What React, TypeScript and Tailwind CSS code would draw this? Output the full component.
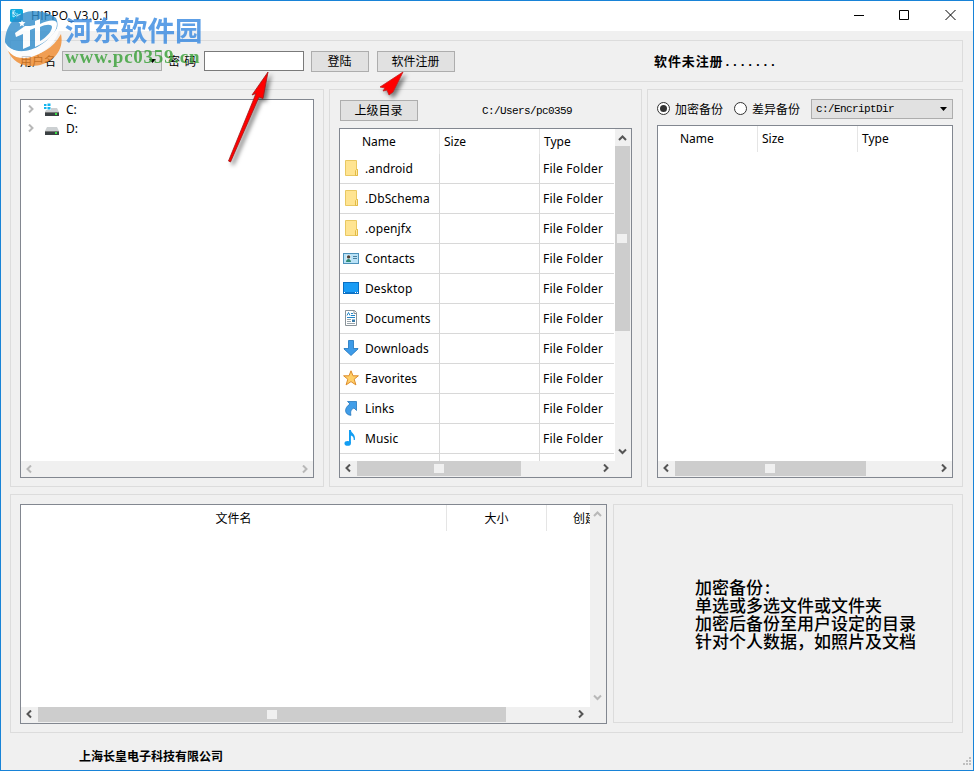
import React from "react";

const files = [
    { name: ".android", icon: "folder" },
    { name: ".DbSchema", icon: "folder" },
    { name: ".openjfx", icon: "folder" },
    { name: "Contacts", icon: "contacts" },
    { name: "Desktop", icon: "desktop" },
    { name: "Documents", icon: "documents" },
    { name: "Downloads", icon: "downloads" },
    { name: "Favorites", icon: "favorites" },
    { name: "Links", icon: "links" },
    { name: "Music", icon: "music" },
];

const FileIcon = ({ kind }: { kind: string }) => (
    <svg width="16" height="16" viewBox="0 0 16 16" className="-mt-px shrink-0">
        {kind === "folder" && (
            <>
                <path d="M2.5 .5h11v9h1v6h-12z" fill="#ffe491" stroke="#e9c862" />
                <path d="M12.5 15.5v-5l1-1h1v6z" fill="#ffe9a4" stroke="#e3bb45" />
            </>
        )}
        {kind === "contacts" && (
            <>
                <rect x=".5" y="3.5" width="15" height="10" fill="#b9e2f7" stroke="#4d92bb" />
                <rect x="3" y="5" width="5" height="7" fill="#d5eef9" />
                <circle cx="5.6" cy="6.9" r="1.7" fill="#4f4036" />
                <path d="M3 12c0-4 5-4 5 0z" fill="#2f8a76" />
                <path d="M10 6.5h4M10 8.5h4" stroke="#4a7f9e" />
            </>
        )}
        {kind === "desktop" && (
            <>
                <rect x=".5" y="2.5" width="15" height="11" fill="#1a9cf5" stroke="#0b6fc2" />
                <path d="M1 12.5h14" stroke="#0b78d0" />
                <path d="M1 12.5h1M12 12.5h1M14 12.5h1" stroke="#fff" />
            </>
        )}
        {kind === "documents" && (
            <>
                <path d="M2.5 .5h9l2 2v13h-11z" fill="#fff" stroke="#8a9399" />
                <path d="M11 .5v3h2.5" fill="none" stroke="#8a9399" />
                <path d="M4 5.5l1.500-3 1.500 3M8 3.500h2M8 5.500h4M4 7.500h8" fill="none" stroke="#2486c8" />
                <path d="M4 9.500h4M4 11.500h4M4 13.500h8" stroke="#9aa5ab" />
                <rect x="9" y="9.500" width="3" height="2.500" fill="#397ba8" />
            </>
        )}
        {kind === "downloads" && (
            <path d="M5.500 .5h5v8h4.500v.5l-7 6.500L1 9v-.5h4.500z" fill="#3d9be8" stroke="#1d74bd" strokeWidth=".8" />
        )}
        {kind === "favorites" && (
            <path d="M8 .8l2 5h5.400l-4.200 3.400 1.700 5.700L8 11.600l-4.900 3.300 1.700-5.700L.6 5.800H6z" fill="#ffcf68" stroke="#dd8d2d" />
        )}
        {kind === "links" && (
            <path d="M4.500 1.500h9v9l-2.500-2.500c-3 1-4 4-3 7.300C1.500 15 .5 8 7 4z" fill="#429ee8" stroke="#2479bf" strokeWidth=".8" />
        )}
        {kind === "music" && (
            <>
                <ellipse cx="4.700" cy="13.400" rx="3.200" ry="2.400" fill="#129df2" />
                <path d="M6 0h1.900c.3 3.500 5 4 4 10h-1.200c.3-3-1-4-2.800-4.600V13H6z" fill="#129df2" />
            </>
        )}
    </svg>
);

const Chevron = ({ dir, muted }: { dir: "left" | "right" | "up" | "down"; muted?: boolean }) => {
    const shapes = {
        left: "M6 .5L2.500 4 6 7.500",
        right: "M3 .5L6.500 4 3 7.500",
        up: "M1 6L4.500 2.500 8 6",
        down: "M1 2.500L4.500 6 8 2.500",
    };
    return (
        <svg width="9" height="9" viewBox="0 0 9 9" className="shrink-0">
            <path d={shapes[dir]} fill="none" stroke={muted ? "#b8b8b8" : "#555"} strokeWidth="2" />
        </svg>
    );
};

const Grip = () => <span className="mr-px h-[9px] w-[10px] bg-[#f0f0f0]" />;

const DriveIcon = ({ system }: { system?: boolean }) => (
    <svg width="16" height="14" viewBox="0 0 16 14" className="shrink-0">
        <path d="M3 5h10l2 4H1z" fill="#ccd0d2" />
        <rect x="1" y="9" width="14" height="4" fill="#3b4043" />
        <path d="M1 9.500h14" stroke="#777" />
        <rect x="11" y="10" width="2" height="2" fill="#36e045" />
        {system && <path d="M0 0h7v7H0z" fill="#fff" />}
        {system && <path d="M0 1h2.500v2H0zM3.500 .5h3V3h-3zM0 4h2.500v2H0zM3.500 4h3v2.500h-3z" fill="#12b4ee" />}
    </svg>
);

const Watermark = () => (
    <div className="pointer-events-none absolute left-[4px] top-[8px] flex h-[60px] w-[210px] opacity-80">
        <svg width="58" height="60" viewBox="0 0 58 60" className="shrink-0">
            <path d="M0 34C0 14 14 2 29 2c9 0 17 3 22 7 5 10-3 23-15 29C24 45 7 45 0 34z" fill="#2e8ccb" />
            <path d="M56 25c4 19-12 32-29 32C15 57 7 51 3 42c18 10 42 4 53-17z" fill="#f08a2c" />
            <path d="M0 33c7 16 39 12 55-19 0 18-17 33-34 35C9 50 1 43 0 33z" fill="#fff" />
            <path d="M10 24l10-7h5v20l-7 3V25l-7 3z" fill="#fff" />
            <path fillRule="evenodd" d="M25 17l5-1v-4l5-2v5c8-4 17-5 17 0 0 9-9 17-22 23V19l-5 2zM35 18v14c7-4 12-10 12-14 0-3-6-3-12 0z" fill="#fff" />
            <path d="M17 11l1 2 2.500.3-2 1.700.5 2.500-2-1.300-2.200 1.300.6-2.500-1.900-1.700 2.500-.3z" fill="#fff" />
        </svg>
        <div className="flex w-[142px] flex-col whitespace-nowrap pl-[2px]">
            <span className="h-[30px] font-['Noto_Sans_CJK_SC',sans-serif] text-[27.500px] font-bold leading-[41px] text-[#3588e0]">河东软件园</span>
            <span className="font-['Liberation_Serif',serif] text-[19px] font-bold leading-[36px] tracking-[0.750px] text-[#37a035]">www.pc0359.cn</span>
        </div>
    </div>
);

const Arrows = () => (
    <svg width="240" height="105" viewBox="0 0 240 105" className="pointer-events-none absolute left-[219px] top-[64px] drop-shadow-[3px_3px_2px_rgba(0,0,0,0.5)]">
        <path d="M48 7L32 30l4-1.500L8.500 96l2 1L39 32l4 1.500z" fill="#f00" stroke="#a01818" strokeWidth=".8" />
        <path d="M183 7l-23 15 5 1-2 3 4-1 2 5 4-3z" fill="#f00" stroke="#c51c1c" strokeWidth=".8" />
    </svg>
);

const Button = ({ children, className }: { children: React.ReactNode; className: string }) => (
    <button className={`flex h-[21px] shrink-0 items-center justify-center border border-[#adadad] bg-[#e1e1e1] pb-px pr-px ${className}`}>{children}</button>
);

const Caret = () => (
    <svg width="7" height="4" viewBox="0 0 7 4" className="mr-[5px] shrink-0">
        <path d="M0 0h7L3.500 4z" fill="#000" />
    </svg>
);

const Radio = ({ checked }: { checked?: boolean }) => (
    <span className="-mt-px flex size-[13px] shrink-0 items-center justify-center rounded-full border border-[#333] bg-white">
        {checked && <span className="size-[7px] rounded-full bg-[#333]" />}
    </span>
);

export default function App() {
    return (
        <div className="relative flex h-[771px] w-[974px] flex-col overflow-hidden border border-[#1883d7] bg-[#f0f0f0] font-['Noto_Sans_CJK_SC',sans-serif] text-[12px] leading-none text-black">
            <header className="flex h-[30px] shrink-0 items-center bg-white pb-[2px] pl-[9px] pr-[17px]">
                <svg width="13" height="13" viewBox="0 0 13 13">
                    <rect width="13" height="13" rx="1.500" fill="#10a9dd" />
                    <path d="M3 1v7l2-1M2 4h4M5 1L3 4l3 3M7 4v6M9 5v5M7 7l4-2" fill="none" stroke="#d9f4ff" strokeWidth=".8" />
                </svg>
                <span className="ml-[8px] whitespace-pre pt-px font-['Open_Sans',sans-serif] text-[12px] tracking-[0.300px]">HIPPO_V3.0.1</span>
                <svg width="104" height="12" viewBox="0 0 104 12" className="ml-auto" fill="none" stroke="#000">
                    <path d="M2 6.500h10M47.500 1.500h9v9h-9zM93.500 1l10 10M103.500 1l-10 10" />
                </svg>
            </header>

            <main className="flex flex-col gap-[7px] px-[9px] pt-[9px]">
                <section className="flex h-[42px] w-[953px] items-center border border-[#dcdcdc] pl-[8px]">
                    <span className="w-[43px] pl-px">用户名</span>
                    <div className="flex h-5 w-[100px] items-center justify-end border border-[#adadad] bg-[#e1e1e1]"><Caret /></div>
                    <span className="ml-[6px] w-[36px] whitespace-pre tracking-[0.800px]">密 码</span>
                    <div className="h-5 w-[100px] border border-[#7a7a7a] bg-white" />
                    <Button className="ml-[7px] w-[58px]">登陆</Button>
                    <Button className="ml-[8px] w-[78px]">软件注册</Button>
                    <span className="ml-[199px] pt-px text-[13px] font-bold tracking-[0.900px]">软件未注册<span className="font-['Liberation_Mono',monospace] tracking-[-0.200px]">.......</span></span>
                </section>

                <div className="flex h-[398px] gap-[5px]">
                    <section className="w-[314px] border border-[#dcdcdc] p-[9px]">
                        <div className="flex h-[379px] w-[294px] flex-col border border-[#828790] bg-white">
                            <div className="flex h-[19px] items-center gap-[9px] pl-[5px]">
                                <Chevron dir="right" muted />
                                <DriveIcon system />
                                <span className="-ml-[3px] pt-px font-['Noto_Sans',sans-serif]">C:</span>
                            </div>
                            <div className="flex h-[19px] items-center gap-[9px] pl-[5px]">
                                <Chevron dir="right" muted />
                                <DriveIcon />
                                <span className="-ml-[3px] pt-px font-['Noto_Sans',sans-serif]">D:</span>
                            </div>
                            <div className="mt-auto flex h-4 items-center justify-between bg-[#f0f0f0] px-[4px]">
                                <Chevron dir="left" muted />
                                <Chevron dir="right" muted />
                            </div>
                        </div>
                    </section>

                    <section className="w-[313px] border border-[#dcdcdc] px-[9px] pt-[10px]">
                        <div className="flex items-center pl-px">
                            <Button className="w-[78px]">上级目录</Button>
                            <span className="ml-[64px] pt-px font-['Liberation_Mono',monospace] text-[11px] tracking-[-0.600px]">C:/Users/pc0359</span>
                        </div>
                        <div className="mt-[7px] flex h-[350px] w-[293px] flex-col border border-[#828790] bg-[#f0f0f0] font-['Noto_Sans',sans-serif]">
                            <div className="flex h-[332px]">
                                <div className="w-[275px] overflow-hidden bg-white pr-px">
                                    <div className="grid h-[25px] grid-cols-[100px_100px_74px] items-center">
                                        <span className="flex h-full items-center border-r border-[#e5e5e5] pl-[22px]">Name</span>
                                        <span className="flex h-full items-center border-r border-[#e5e5e5] pl-[4px]">Size</span>
                                        <span className="pl-[4px]">Type</span>
                                    </div>
                                    {files.map((file) => (
                                        <div key={file.name} className="grid h-[30px] grid-cols-[100px_100px_74px] border-b border-[#d8d8d8]">
                                            <span className="flex items-center gap-[6px] border-r border-[#d8d8d8] pl-[3px] tracking-[0.100px]"><FileIcon kind={file.icon} />{file.name}</span>
                                            <span className="border-r border-[#d8d8d8]" />
                                            <span className="flex items-center whitespace-nowrap pl-[3px] tracking-[0.200px]">File Folder</span>
                                        </div>
                                    ))}
                                    <div className="grid h-[7px] grid-cols-[100px_100px_74px]">
                                        <span className="border-r border-[#d8d8d8]" />
                                        <span className="border-r border-[#d8d8d8]" />
                                    </div>
                                </div>
                                <div className="flex w-[15px] flex-col items-center pt-[5px]">
                                    <Chevron dir="up" />
                                    <div className="mt-[3px] flex h-[185px] w-[15px] items-center justify-center bg-[#cdcdcd] pb-px"><Grip /></div>
                                    <div className="mt-auto pb-[5px]"><Chevron dir="down" /></div>
                                </div>
                            </div>
                            <div className="flex h-4 items-center pb-px pl-[4px]">
                                <Chevron dir="left" />
                                <div className="ml-[4px] flex h-[15px] w-[164px] items-center justify-center bg-[#cdcdcd]"><Grip /></div>
                                <div className="ml-auto mr-[21px]"><Chevron dir="right" /></div>
                            </div>
                        </div>
                    </section>

                    <section className="w-[316px] border border-[#dcdcdc] p-[9px]">
                        <div className="flex h-5 items-center">
                            <Radio checked />
                            <span className="ml-[5px] w-[59px]">加密备份</span>
                            <Radio />
                            <span className="ml-[5px] w-[59px]">差异备份</span>
                            <div className="flex h-5 w-[142px] items-center justify-between border border-[#adadad] bg-[#e1e1e1] pl-[4px]">
                                <span className="pt-px font-['Liberation_Mono',monospace] text-[11px] tracking-[-0.600px]">c:/EncriptDir</span>
                                <Caret />
                            </div>
                        </div>
                        <div className="mt-[6px] flex h-[353px] w-[296px] flex-col border border-[#828790] bg-white font-['Noto_Sans',sans-serif]">
                            <div className="grid h-[26px] grid-cols-[100px_100px_94px]">
                                <span className="flex items-center border-r border-[#e5e5e5] pl-[22px]">Name</span>
                                <span className="flex items-center border-r border-[#e5e5e5] pl-[4px]">Size</span>
                                <span className="flex items-center pl-[4px]">Type</span>
                            </div>
                            <div className="mt-auto flex h-4 items-center bg-[#f0f0f0] pb-px pl-[4px] pr-[4px]">
                                <Chevron dir="left" />
                                <div className="ml-[4px] flex h-[15px] w-[191px] items-center justify-center bg-[#cdcdcd]"><Grip /></div>
                                <div className="ml-auto"><Chevron dir="right" /></div>
                            </div>
                        </div>
                    </section>
                </div>

                <section className="flex h-[239px] w-[953px] gap-[6px] border border-[#dcdcdc] p-[9px]">
                    <div className="flex h-[220px] w-[587px] flex-col border border-[#828790] bg-[#f0f0f0]">
                        <div className="flex h-[202px]">
                            <div className="w-[569px] bg-white">
                                <div className="grid h-[26px] grid-cols-[426px_100px_43px]">
                                    <span className="flex items-center justify-center border-r border-[#e5e5e5] pb-px">文件名</span>
                                    <span className="flex items-center justify-center border-r border-[#e5e5e5] pb-px">大小</span>
                                    <span className="flex items-center overflow-hidden whitespace-nowrap pb-px pl-[26px]">创建时间</span>
                                </div>
                            </div>
                            <div className="flex w-[15px] flex-col items-center justify-between py-[5px]">
                                <Chevron dir="up" muted />
                                <Chevron dir="down" muted />
                            </div>
                        </div>
                        <div className="flex h-4 items-center pb-px pl-[4px]">
                            <Chevron dir="left" />
                            <div className="ml-[4px] flex h-[15px] w-[468px] items-center justify-center bg-[#cdcdcd]"><Grip /></div>
                            <div className="ml-auto mr-[21px]"><Chevron dir="right" /></div>
                        </div>
                    </div>
                    <div className="h-[219px] w-[340px] whitespace-nowrap border border-[#dcdcdc] pl-[81px] pt-[73px] text-[17px] font-medium leading-[18px]">
                        <p>加密备份<span className="pl-[2px]">:</span></p>
                        <p>单选或多选文件或文件夹</p>
                        <p>加密后备份至用户设定的目录</p>
                        <p>针对个人数据，如照片及文档</p>
                    </div>
                </section>
            </main>

            <footer className="flex flex-1 items-center justify-between pb-px pl-[78px] pr-[2px] pt-[10px]">
                <span className="font-bold">上海长皇电子科技有限公司</span>
                <svg width="8" height="8" viewBox="0 0 8 8" className="mb-[4px] self-end" fill="#bfbfbf">
                    <path d="M6 0h2v2H6zM3 3h2v2H3zM6 3h2v2H6zM0 6h2v2H0zM3 6h2v2H3zM6 6h2v2H6z" />
                </svg>
            </footer>

            <Watermark />
            <Arrows />
        </div>
    );
}
